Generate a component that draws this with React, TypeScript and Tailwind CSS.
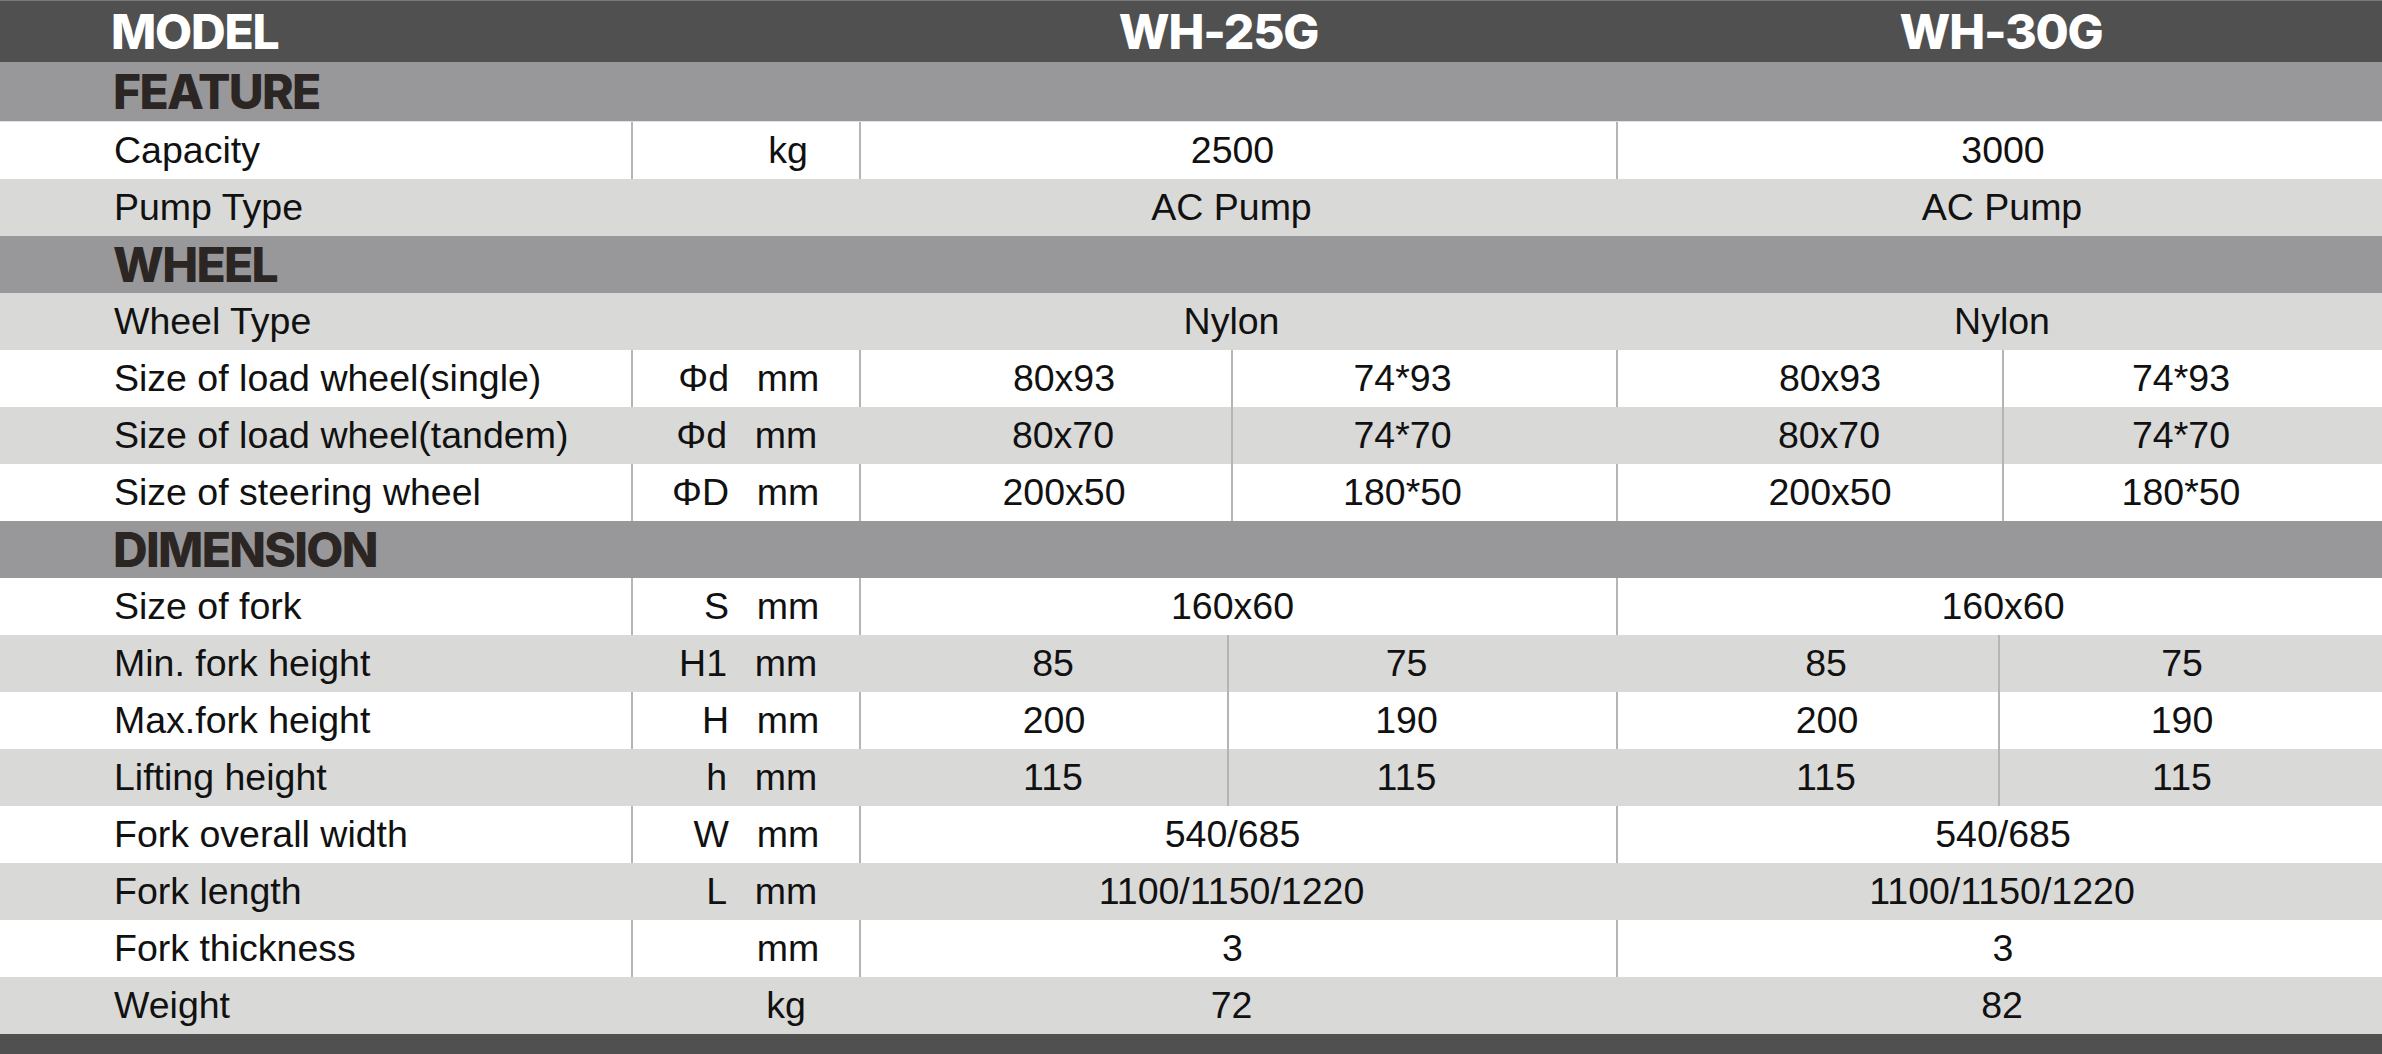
import React from "react";

const body = "font-['Liberation_Sans',Arial,sans-serif] text-[37.5px] text-[#111]";
const head = "font-['Inter','Liberation_Sans',sans-serif] font-extrabold tracking-tight";
const sec = "font-['Inter','Liberation_Sans',sans-serif] font-extrabold tracking-[-0.035em]";
const div = "border-l-2 border-[#b5b5b5]";

type Kind = "span" | "wheel" | "dim";
type R = {
  label: string;
  sym?: string;
  unit?: string;
  vals: string[];
  light: boolean;
  kind: Kind;
};

const Section = ({ title }: { title: string }) => (
  <div className="h-[57px] bg-[#98989a] flex items-center pl-[113px]">
    <span className={`${sec} text-[48px] leading-none text-[#2b2624]`}>{title}</span>
  </div>
);

const Unit = ({ sym, unit, border }: { sym?: string; unit?: string; border: boolean }) => (
  <div className={`flex items-center h-full ${border ? div : ""}`}>
    <span className={`w-[96px] text-right ${border ? "" : "pl-[2px]"}`}>{sym ?? ""}</span>
    <span className="w-[118px] text-center">{unit ?? ""}</span>
  </div>
);

const Row = ({ r }: { r: R }) => {
  const bg = r.light ? "bg-[#d9d9d8]" : "bg-white";
  const b = !r.light;
  const cols =
    r.kind === "span"
      ? "grid-cols-[631px_228px_757px_766px]"
      : r.kind === "wheel"
      ? "grid-cols-[631px_228px_372px_385px_386px_380px]"
      : "grid-cols-[631px_228px_368px_389px_382px_384px]";
  const pads =
    r.kind === "wheel"
      ? ["pl-[36px]", "pr-[44px]", "pl-[40px]", "pr-[24px]"]
      : ["pl-[20px]", "pr-[32px]", "pl-[38px]", "pr-[18px]"];
  return (
    <div className={`h-[57px] grid ${cols} ${bg} ${body}`}>
      <div className="flex items-center pl-[114px] h-full whitespace-nowrap">{r.label}</div>
      <Unit sym={r.sym} unit={r.unit} border={b} />
      {r.kind === "span" ? (
        <>
          <div className={`flex items-center justify-center h-full pr-[12px] ${b ? div : ""}`}>{r.vals[0]}</div>
          <div className={`flex items-center justify-center h-full pl-[6px] ${b ? div : ""}`}>{r.vals[1]}</div>
        </>
      ) : (
        <>
          <div className={`flex items-center justify-center h-full ${pads[0]} ${b ? div : ""}`}>{r.vals[0]}</div>
          <div className={`flex items-center justify-center h-full ${pads[1]} ${div}`}>{r.vals[1]}</div>
          <div className={`flex items-center justify-center h-full ${pads[2]} ${b ? div : ""}`}>{r.vals[2]}</div>
          <div className={`flex items-center justify-center h-full ${pads[3]} ${div}`}>{r.vals[3]}</div>
        </>
      )}
    </div>
  );
};

const feature: R[] = [
  { label: "Capacity", unit: "kg", vals: ["2500", "3000"], light: false, kind: "span" },
  { label: "Pump Type", vals: ["AC Pump", "AC Pump"], light: true, kind: "span" },
];
const wheel: R[] = [
  { label: "Wheel Type", vals: ["Nylon", "Nylon"], light: true, kind: "span" },
  { label: "Size of load wheel(single)", sym: "Φd", unit: "mm", vals: ["80x93", "74*93", "80x93", "74*93"], light: false, kind: "wheel" },
  { label: "Size of load wheel(tandem)", sym: "Φd", unit: "mm", vals: ["80x70", "74*70", "80x70", "74*70"], light: true, kind: "wheel" },
  { label: "Size of steering wheel", sym: "ΦD", unit: "mm", vals: ["200x50", "180*50", "200x50", "180*50"], light: false, kind: "wheel" },
];
const dim: R[] = [
  { label: "Size of fork", sym: "S", unit: "mm", vals: ["160x60", "160x60"], light: false, kind: "span" },
  { label: "Min. fork height", sym: "H1", unit: "mm", vals: ["85", "75", "85", "75"], light: true, kind: "dim" },
  { label: "Max.fork height", sym: "H", unit: "mm", vals: ["200", "190", "200", "190"], light: false, kind: "dim" },
  { label: "Lifting height", sym: "h", unit: "mm", vals: ["115", "115", "115", "115"], light: true, kind: "dim" },
  { label: "Fork overall width", sym: "W", unit: "mm", vals: ["540/685", "540/685"], light: false, kind: "span" },
  { label: "Fork length", sym: "L", unit: "mm", vals: ["1100/1150/1220", "1100/1150/1220"], light: true, kind: "span" },
  { label: "Fork thickness", unit: "mm", vals: ["3", "3"], light: false, kind: "span" },
  { label: "Weight", unit: "kg", vals: ["72", "82"], light: true, kind: "span" },
];

export default function App() {
  return (
    <div className="w-[2382px] h-[1054px] bg-white overflow-hidden flex flex-col">
      <div className="h-[62px] bg-[#505050] border-t border-[#7a7a7a] grid grid-cols-[859px_757px_766px] items-center text-white">
        <span className={`${head} text-[48px] leading-none pl-[111px]`}>MODEL</span>
        <span className={`${head} text-[48px] leading-none text-center pr-[38px]`}>WH-25G</span>
        <span className={`${head} text-[48px] leading-none text-center pl-[4px]`}>WH-30G</span>
      </div>
      <div className="h-[60px] bg-[#98989a] flex items-center pl-[113px] border-b border-[#e2e2e2]">
        <span className={`${sec} text-[48px] leading-none text-[#2b2624]`}>FEATURE</span>
      </div>
      {feature.map((r) => (
        <Row key={r.label} r={r} />
      ))}
      <Section title="WHEEL" />
      {wheel.map((r) => (
        <Row key={r.label} r={r} />
      ))}
      <Section title="DIMENSION" />
      {dim.map((r) => (
        <Row key={r.label} r={r} />
      ))}
      <div className="flex-1 bg-[#505050]" />
    </div>
  );
}
